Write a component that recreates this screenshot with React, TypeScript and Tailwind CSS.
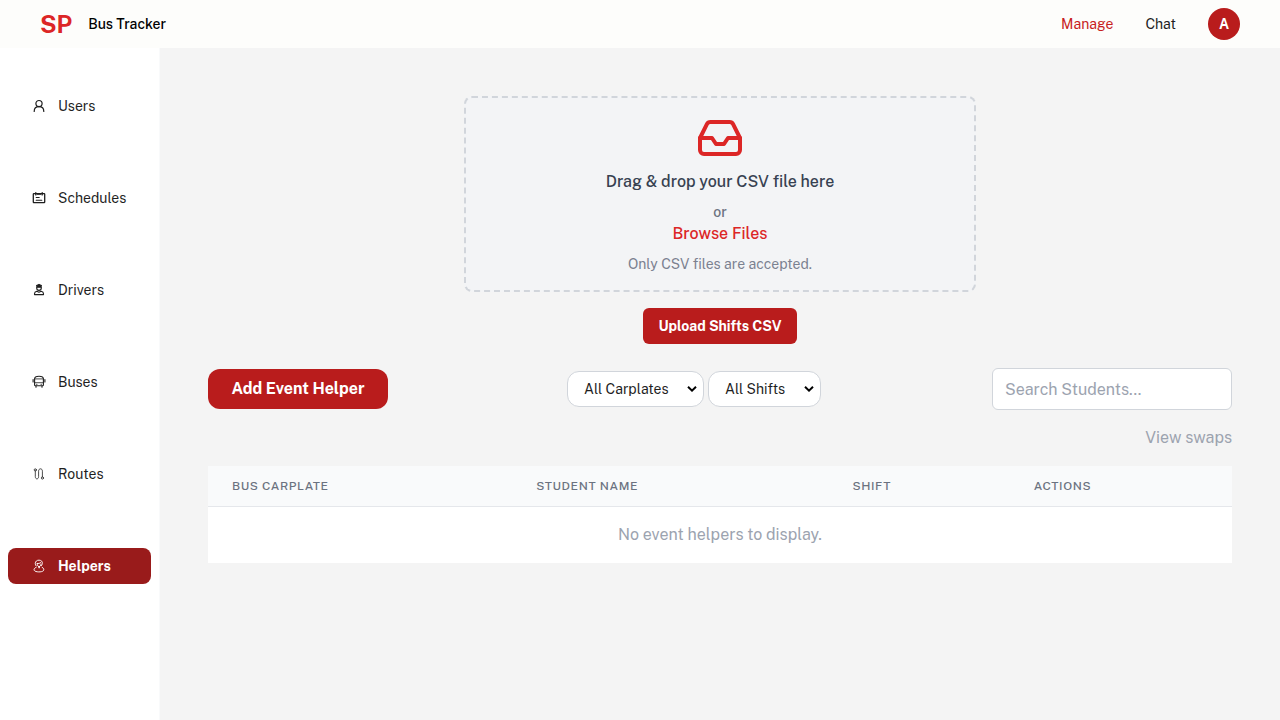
import type { ReactNode } from "react";
import { Inbox } from "lucide-react";

function Glyph({ children, weight = 1.2 }: { children: ReactNode; weight?: number }) {
  return (
    <svg
      viewBox="0 0 14 14"
      className="size-3.5 shrink-0"
      fill="none"
      stroke="currentColor"
      strokeWidth={weight}
      strokeLinecap="round"
      strokeLinejoin="round"
      aria-hidden="true"
    >
      {children}
    </svg>
  );
}

const navItems: { label: string; icon: ReactNode; active?: boolean }[] = [
  {
    label: "Users",
    icon: (
      <Glyph>
        <circle cx="7" cy="4.6" r="3.1" />
        <path d="M2.2 12.5c0-2.8 1.7-4.8 4.8-4.8s4.8 2 4.8 4.8" />
      </Glyph>
    ),
  },
  {
    label: "Schedules",
    icon: (
      <Glyph weight={1.3}>
        <rect x="1.3" y="2.6" width="11.4" height="9.1" rx="0.6" />
        <path d="M3.8 1.7v2.2M10.2 1.7v2.2" />
        <path d="M5.2 3.5h3.6" strokeWidth="0.8" />
        <path d="M4.2 6.5h3M4.2 9.2h5.6" strokeWidth="1.1" />
      </Glyph>
    ),
  },
  {
    label: "Drivers",
    icon: (
      <Glyph weight={1.1}>
        <path d="M4.6 2.5 7 1.4l2.4 1.1-.5 1.7H5.1z" fill="currentColor" />
        <path d="M4.7 4.2v.9a2.3 2.3 0 0 0 4.6 0v-.9" />
        <path d="M2.5 11.6v-.9c0-1.4.9-2.2 2.3-2.5L7 9.2l2.2-1c1.4.3 2.3 1.1 2.3 2.5v.9z" />
      </Glyph>
    ),
  },
  {
    label: "Buses",
    icon: (
      <Glyph weight={1.1}>
        <path d="M2.6 9.9V3.8c0-1.9 1.6-2.6 4.4-2.6s4.4.7 4.4 2.6v6.1c0 .5-.4.8-.9.8h-7c-.5 0-.9-.3-.9-.8z" />
        <path d="M2.6 3.9h8.8M2.6 7.7h8.8" strokeWidth="0.8" />
        <path d="M1.1 4.6v2.3M12.9 4.6v2.3M4 11v1.3M10 11v1.3M4.7 9.3h.2M9.1 9.3h.2" />
      </Glyph>
    ),
  },
  {
    label: "Routes",
    icon: (
      <Glyph weight={0.8}>
        <circle cx="3.3" cy="2.9" r="1.1" />
        <path d="M3.3 4v5.6c0 3 3.3 3 3.3 0V4.2c0-3.2 3.8-3.2 3.8 0v5.6" />
        <circle cx="10.4" cy="11" r="1.1" />
      </Glyph>
    ),
  },
  {
    label: "Helpers",
    active: true,
    icon: (
      <Glyph weight={0.95}>
        <path d="M9.5 6.6c1-1.3 1.2-3.2.2-4.4-1.2-1.3-4-1.4-5.3-.2-1.5 1.3-1.5 3.6-.3 4.9" />
        <path d="M5.2 4.5c1.5.2 2.7-.1 3.5-1" />
        <path d="M5.2 4.7c0 1.8.8 2.9 1.9 2.9s1.9-1 1.9-2.6" />
        <path d="M7.1 7.6v1" strokeWidth="1.6" />
        <path d="M4.2 8.3c-1.9.6-2.5 2-1.9 3.1 1 1.9 7.6 2 9.1.3.9-1.2.3-2.7-1.3-3.4" />
      </Glyph>
    ),
  },
];

const columns = [
  { label: "Bus Carplate", width: "w-[29.7%]" },
  { label: "Student Name", width: "w-[30.9%]" },
  { label: "Shift", width: "w-[17.7%]" },
  { label: "Actions", width: "w-[21.7%]" },
];

function Header() {
  return (
    <header className="flex h-12 items-center justify-between bg-[#fdfdfb] px-10">
      <div className="flex items-center gap-4">
        <span className="text-2xl font-bold text-[#dc2626]">SP</span>
        <span className="text-sm font-medium text-black">Bus Tracker</span>
      </div>
      <nav className="flex items-center gap-8 text-sm">
        <a href="#manage" className="text-[#c81e1e]">Manage</a>
        <a href="#chat" className="text-[#1f1f1f]">Chat</a>
        <button
          type="button"
          aria-label="Account"
          className="flex size-8 items-center justify-center rounded-full bg-[#b91c1c] text-sm font-bold text-white"
        >
          A
        </button>
      </nav>
    </header>
  );
}

function Sidebar() {
  return (
    <aside className="w-40 shrink-0 border-r border-[#f9fafb] bg-white px-2 pt-10">
      <ul className="flex flex-col gap-14">
        {navItems.map((item) => (
          <li key={item.label}>
            <a
              href={`#${item.label.toLowerCase()}`}
              className={
                item.active
                  ? "flex h-9 items-center gap-3 rounded-lg bg-[#991b1b] px-6 text-sm font-bold text-white"
                  : "flex h-9 items-center gap-3 rounded-lg px-6 text-sm text-[#1f1f1f]"
              }
            >
              {item.icon}
              {item.label}
            </a>
          </li>
        ))}
      </ul>
    </aside>
  );
}

function FilterSelect({ label, option, width }: { label: string; option: string; width: string }) {
  return (
    <div className={`relative ${width}`}>
      <select
        aria-label={label}
        className="h-9 w-full appearance-none rounded-xl border border-[#d1d5db] bg-white px-4 text-sm text-[#1f1f1f]"
      >
        <option>{option}</option>
      </select>
      <svg
        viewBox="0 0 10 6"
        className="pointer-events-none absolute top-[15px] right-[7px] h-1.5 w-2.5"
        fill="none"
        stroke="#000000"
        strokeWidth="2"
        aria-hidden="true"
      >
        <path d="M1 .8 5 4.6 9 .8" />
      </svg>
    </div>
  );
}

export default function App() {
  return (
    <div className="flex min-h-screen flex-col bg-[#f4f4f4] font-['Public_Sans','Inter',sans-serif]">
      <Header />
      <div className="flex grow">
        <Sidebar />
        <main className="min-w-0 grow p-12">
          <section className="flex flex-col items-center gap-4">
            <div className="flex w-full max-w-lg flex-col items-center rounded-lg border-2 border-dashed border-[#d1d5db] bg-[#f3f4f6] p-4 text-center">
              <Inbox className="size-12 text-[#dc2626]" strokeWidth={2} aria-hidden="true" />
              <p className="mt-2 text-base font-medium text-[#374151]">Drag &amp; drop your CSV file here</p>
              <p className="mt-2 text-sm font-medium text-[#6b7280]">or</p>
              <button type="button" className="text-base font-medium text-[#dc2626]">Browse Files</button>
              <p className="mt-2 text-sm text-[#7b8190]">Only CSV files are accepted.</p>
            </div>
            <button type="button" className="h-9 w-[154px] rounded-md bg-[#b91c1c] text-sm font-bold whitespace-nowrap text-white">
              Upload Shifts CSV
            </button>
          </section>

          <section className="mt-6 flex items-center justify-between">
            <button type="button" className="h-10 w-[180px] rounded-xl bg-[#b91c1c] font-bold whitespace-nowrap text-white">
              Add Event Helper
            </button>
            <div className="ml-2 flex gap-1">
              <FilterSelect label="Carplate" option="All Carplates" width="w-[137px]" />
              <FilterSelect label="Shift" option="All Shifts" width="w-[113px]" />
            </div>
            <input
              type="text"
              aria-label="Search students"
              placeholder="Search Students..."
              className="h-[42px] w-60 rounded-md border border-[#d1d5db] bg-white px-3 text-base placeholder:text-[#9ca3af]"
            />
          </section>

          <div className="mt-4 flex justify-end">
            <button type="button" className="text-base text-[#9ca3af]">View swaps</button>
          </div>

          <table className="mt-4 w-full table-fixed bg-white">
            <thead className="bg-[#f9fafb]">
              <tr className="border-b border-[#e5e7eb]">
                {columns.map((column) => (
                  <th
                    key={column.label}
                    scope="col"
                    className={`${column.width} px-6 py-3 text-left text-xs font-medium tracking-wider text-[#6b7280] uppercase`}
                  >
                    {column.label}
                  </th>
                ))}
              </tr>
            </thead>
            <tbody>
              <tr>
                <td colSpan={4} className="px-6 py-4 text-center text-base text-[#9ca3af]">
                  No event helpers to display.
                </td>
              </tr>
            </tbody>
          </table>
        </main>
      </div>
    </div>
  );
}
